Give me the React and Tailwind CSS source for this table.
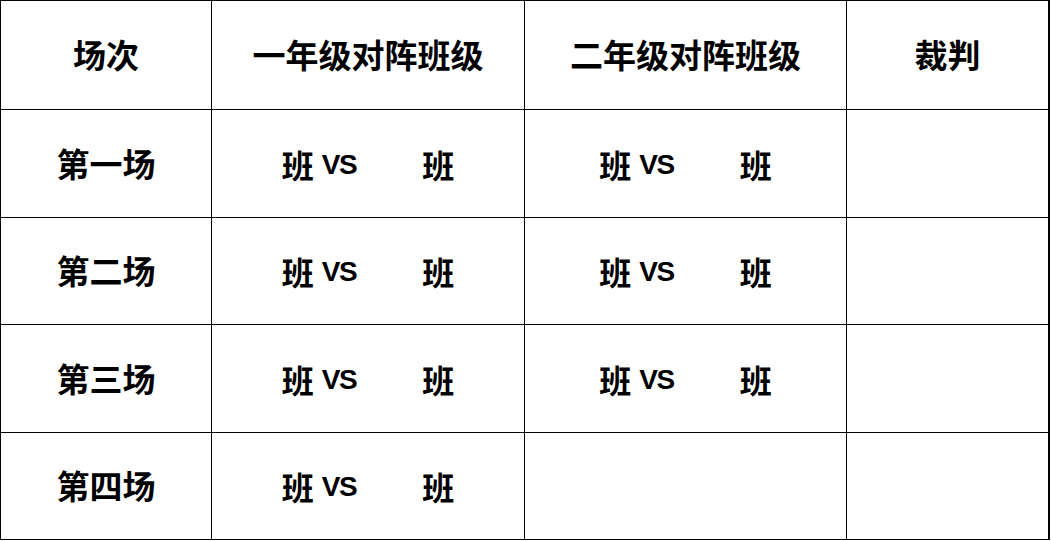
const rows = [
  { name: "第一场", a: true, b: true },
  { name: "第二场", a: true, b: true },
  { name: "第三场", a: true, b: true },
  { name: "第四场", a: true, b: false },
];

const heights = ["h-[108px]", "h-[107px]", "h-[108px]", "h-[107px]"];

function Match() {
  return (
    <div className="flex items-center justify-center text-[32px] font-bold leading-none">
      <span>班</span>
      <span className="ml-[8px] text-[28px] tracking-[-1.5px] translate-y-[1px] font-['Liberation_Sans',sans-serif]">VS</span>
      <span className="ml-[66px]">班</span>
    </div>
  );
}

export default function App() {
  const cell = "border-r border-b border-black flex items-center justify-center";
  return (
    <div className="w-[1051px] h-[541px] bg-white text-black font-['Noto_Sans_CJK_SC','Noto_Sans',sans-serif]">
      <div className="grid grid-cols-[211px_313px_322px_203px] w-[1050px] border-l border-t border-black">
        <div className={`${cell} h-[109px] text-[33px] font-bold`}>场次</div>
        <div className={`${cell} h-[109px] text-[33px] font-bold`}>一年级对阵班级</div>
        <div className={`${cell} h-[109px] text-[33px] font-bold`}>二年级对阵班级</div>
        <div className={`${cell} h-[109px] text-[33px] font-bold border-r-2`}>裁判</div>
        {rows.map((r, i) => (
          <div key={r.name} className="contents">
            <div className={`${cell} ${heights[i]} text-[33px] font-bold`}>{r.name}</div>
            <div className={`${cell} ${heights[i]}`}>{r.a && <Match />}</div>
            <div className={`${cell} ${heights[i]}`}>{r.b && <Match />}</div>
            <div className={`${cell} ${heights[i]} border-r-2`}></div>
          </div>
        ))}
      </div>
    </div>
  );
}
